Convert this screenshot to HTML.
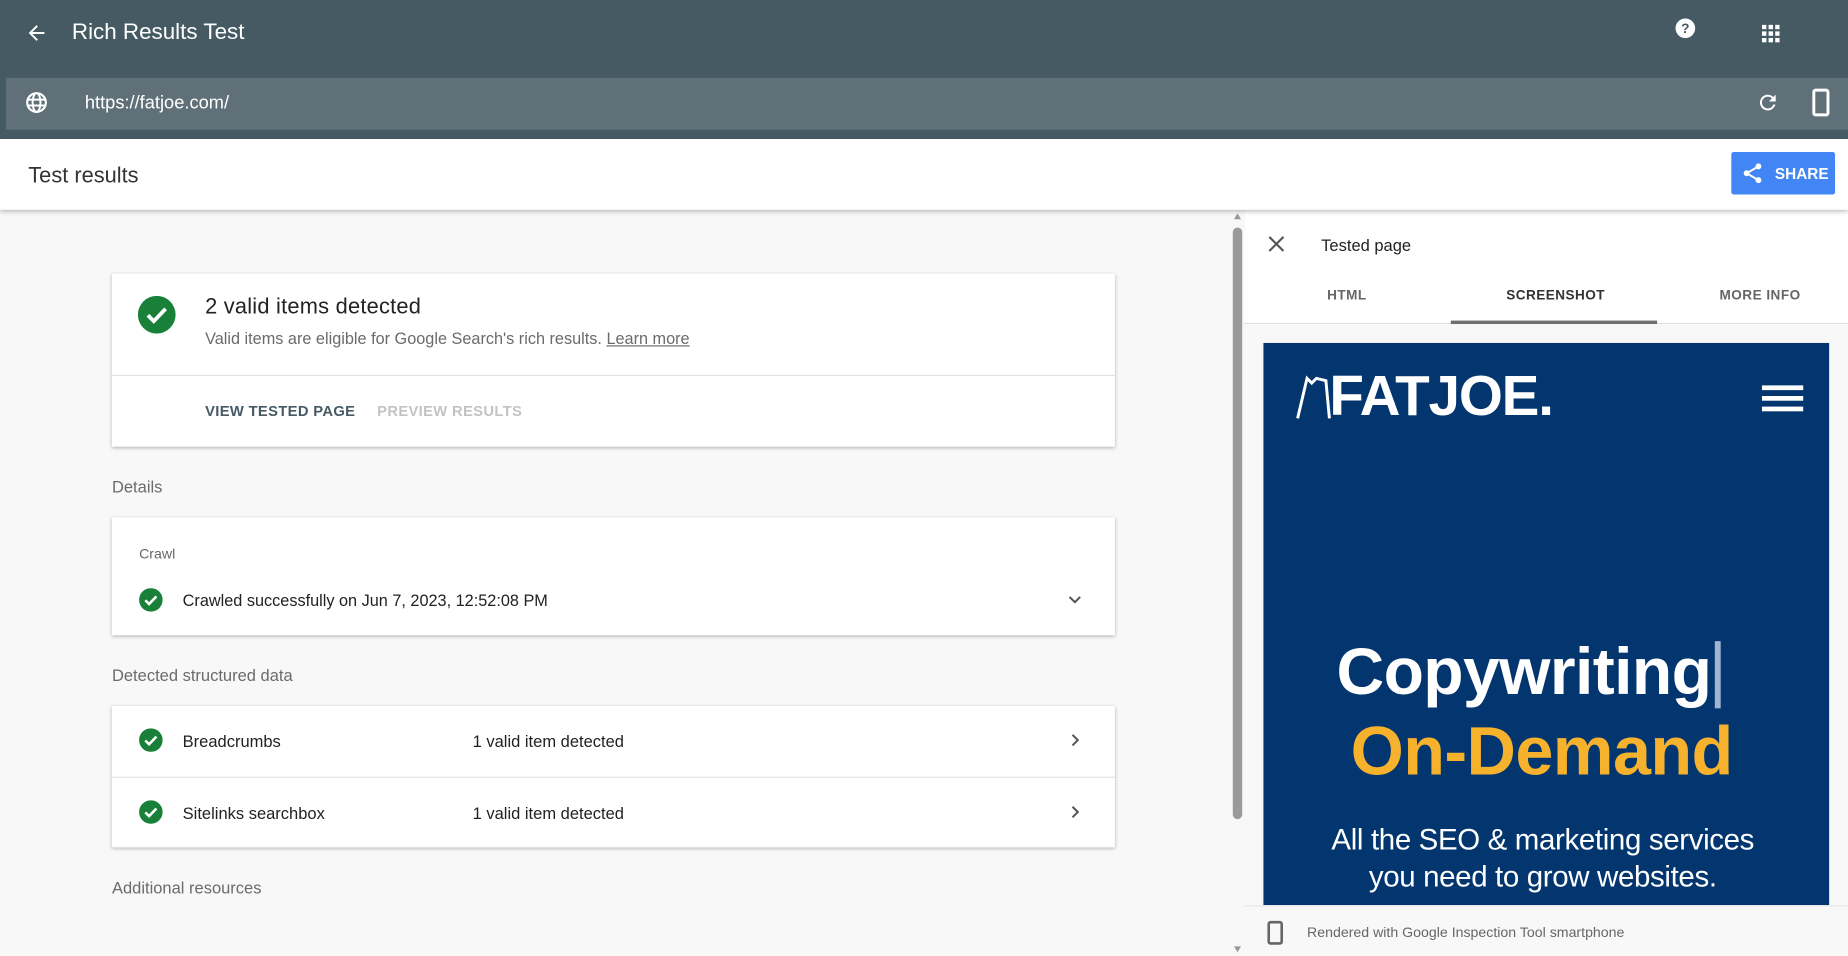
<!DOCTYPE html>
<html><head><meta charset="utf-8">
<style>
html,body{margin:0;padding:0;width:1848px;height:955px;overflow:hidden;background:#f8f8f8;font-family:"Liberation Sans",Arial,sans-serif}
#r{position:absolute;left:0;top:0;width:1568px;height:810px;transform:scale(1.17857);transform-origin:0 0;background:#f8f8f8}
.a{position:absolute}
.top{left:0;top:0;width:1568px;height:118px;background:#465a64}
.url{left:5px;top:66px;width:1563px;height:44px;background:#5f7079}
.bar{left:0;top:118px;width:1568px;height:60px;background:#fff;box-shadow:0 2px 4px rgba(0,0,0,.25);z-index:2}
.card{background:#fff;box-shadow:0 1px 3px rgba(0,0,0,.28);left:95px;width:851px}
.t{white-space:nowrap}
.sec{font-size:14px;color:#6b6b6b}
</style></head><body><div id="r">
<div class="a top"></div>
<svg class="a" style="left:21px;top:18px" width="20" height="20" viewBox="0 0 24 24"><path d="M20 11H7.8l5.6-5.6L12 4l-8 8 8 8 1.4-1.4L7.8 13H20z" fill="#fff"/></svg>
<div class="a t" style="left:61px;top:17px;font-size:19px;color:#fff">Rich Results Test</div>
<svg class="a" style="left:1420px;top:14px" width="20" height="20" viewBox="0 0 24 24"><circle cx="12" cy="12" r="10" fill="#fff"/><text x="12" y="17" font-size="14" font-weight="bold" text-anchor="middle" fill="#465a64" font-family="Liberation Sans">?</text></svg>
<svg class="a" style="left:1495px;top:21px" width="15" height="15" viewBox="0 0 16 16" fill="#fff"><rect x="0" y="0" width="4" height="4"/><rect x="6" y="0" width="4" height="4"/><rect x="12" y="0" width="4" height="4"/><rect x="0" y="6" width="4" height="4"/><rect x="6" y="6" width="4" height="4"/><rect x="12" y="6" width="4" height="4"/><rect x="0" y="12" width="4" height="4"/><rect x="6" y="12" width="4" height="4"/><rect x="12" y="12" width="4" height="4"/></svg>
<div class="a url"></div>
<svg class="a" style="left:21px;top:77px" width="20" height="20" viewBox="0 0 24 24"><circle cx="12" cy="12" r="9.5" fill="none" stroke="#fff" stroke-width="2.2"/><ellipse cx="12" cy="12" rx="4" ry="9.5" fill="none" stroke="#fff" stroke-width="2"/><path d="M3 9h18M3 15h18" stroke="#fff" stroke-width="2"/></svg>
<div class="a t" style="left:72px;top:79px;font-size:15.5px;color:#fff">https://fatjoe.com/</div>
<svg class="a" style="left:1490px;top:77px" width="20" height="20" viewBox="0 0 24 24"><path d="M17.6 6.4A8 8 0 1 0 19.7 14h-2.1A6 6 0 1 1 12 6c1.7 0 3.1.7 4.2 1.8L13 11h7V4z" fill="#fff"/></svg>
<svg class="a" style="left:1536px;top:75px" width="18" height="24" viewBox="0 0 18 24"><rect x="3" y="1.5" width="12" height="21" rx="1.5" fill="none" stroke="#fff" stroke-width="2.5"/></svg>
<div class="a bar"></div>
<div class="a t" style="left:24px;top:138px;font-size:18.5px;color:#333;z-index:3">Test results</div>
<div class="a" style="left:1469px;top:129px;width:88px;height:36px;background:#4285f4;border-radius:2px;z-index:3"></div>
<svg class="a" style="left:1477px;top:137px;z-index:4" width="20" height="20" viewBox="0 0 24 24"><circle cx="18" cy="5" r="3" fill="#fff"/><circle cx="6" cy="12" r="3" fill="#fff"/><circle cx="18" cy="19" r="3" fill="#fff"/><path d="M18 5L6 12l12 7" stroke="#fff" stroke-width="2" fill="none"/></svg>
<div class="a t" style="left:1506px;top:140px;font-size:13px;font-weight:bold;color:#fff;z-index:4">SHARE</div>

<div class="a" style="left:1046px;top:193px;width:8px;height:502px;background:#9a9a9a;border-radius:4px"></div>
<div class="a" style="left:1047px;top:181px;width:0;height:0;border-left:3px solid transparent;border-right:3px solid transparent;border-bottom:5px solid #999"></div>
<div class="a" style="left:1047px;top:803px;width:0;height:0;border-left:3px solid transparent;border-right:3px solid transparent;border-top:5px solid #999"></div>

<div class="a card" style="top:232px;height:147px"></div>
<svg class="a" style="left:117px;top:251px" width="32" height="32" viewBox="0 0 32 32"><circle cx="16" cy="16" r="16" fill="#188038"/><path d="M8.5 16.5l5 5 10-10.5" stroke="#fff" stroke-width="3.2" fill="none"/></svg>
<div class="a t" style="left:174px;top:249px;font-size:18.5px;font-weight:500;color:#222;letter-spacing:0.2px">2 valid items detected</div>
<div class="a t" style="left:174px;top:280px;font-size:13.8px;color:#6b6b6b">Valid items are eligible for Google Search's rich results. <span style="text-decoration:underline">Learn more</span></div>
<div class="a" style="left:95px;top:318px;width:851px;height:1px;background:#e3e3e3"></div>
<div class="a t" style="left:174px;top:342px;font-size:12.5px;font-weight:bold;color:#455a64;letter-spacing:.3px">VIEW TESTED PAGE</div>
<div class="a t" style="left:320px;top:342px;font-size:12.5px;font-weight:bold;color:#c3c3c3;letter-spacing:.3px">PREVIEW RESULTS</div>

<div class="a t sec" style="left:95px;top:405px">Details</div>
<div class="a card" style="top:439px;height:100px"></div>
<div class="a t" style="left:118px;top:463px;font-size:12px;color:#666">Crawl</div>
<svg class="a" style="left:118px;top:499px" width="20" height="20" viewBox="0 0 20 20"><circle cx="10" cy="10" r="10" fill="#188038"/><path d="M5.3 10.3l3.2 3.2 6.2-6.5" stroke="#fff" stroke-width="2.2" fill="none"/></svg>
<div class="a t" style="left:155px;top:502px;font-size:13.8px;color:#222">Crawled successfully on Jun 7, 2023, 12:52:08 PM</div>
<svg class="a" style="left:905px;top:502px" width="14" height="14" viewBox="0 0 14 14"><path d="M2.5 4.5l4.5 4.5 4.5-4.5" stroke="#555" stroke-width="1.7" fill="none"/></svg>

<div class="a t sec" style="left:95px;top:565px">Detected structured data</div>
<div class="a card" style="top:599px;height:120px"></div>
<div class="a" style="left:95px;top:659px;width:851px;height:1px;background:#e3e3e3"></div>
<svg class="a" style="left:118px;top:618px" width="20" height="20" viewBox="0 0 20 20"><circle cx="10" cy="10" r="10" fill="#188038"/><path d="M5.3 10.3l3.2 3.2 6.2-6.5" stroke="#fff" stroke-width="2.2" fill="none"/></svg>
<div class="a t" style="left:155px;top:621px;font-size:14px;color:#222">Breadcrumbs</div>
<div class="a t" style="left:401px;top:621px;font-size:14px;color:#222">1 valid item detected</div>
<svg class="a" style="left:905px;top:621px" width="14" height="14" viewBox="0 0 14 14"><path d="M5 2.5l4.5 4.5-4.5 4.5" stroke="#555" stroke-width="1.7" fill="none"/></svg>
<svg class="a" style="left:118px;top:679px" width="20" height="20" viewBox="0 0 20 20"><circle cx="10" cy="10" r="10" fill="#188038"/><path d="M5.3 10.3l3.2 3.2 6.2-6.5" stroke="#fff" stroke-width="2.2" fill="none"/></svg>
<div class="a t" style="left:155px;top:682px;font-size:14px;color:#222">Sitelinks searchbox</div>
<div class="a t" style="left:401px;top:682px;font-size:14px;color:#222">1 valid item detected</div>
<svg class="a" style="left:905px;top:682px" width="14" height="14" viewBox="0 0 14 14"><path d="M5 2.5l4.5 4.5-4.5 4.5" stroke="#555" stroke-width="1.7" fill="none"/></svg>
<div class="a t sec" style="left:95px;top:745px">Additional resources</div>

<!-- right panel -->
<div class="a" style="left:1056px;top:178px;width:512px;height:632px;background:#fff"></div>
<svg class="a" style="left:1075px;top:199px" width="16" height="16" viewBox="0 0 16 16"><path d="M2 2l12 12M14 2L2 14" stroke="#555" stroke-width="1.8"/></svg>
<div class="a t" style="left:1121px;top:200px;font-size:14px;color:#222">Tested page</div>
<div class="a t" style="left:1126px;top:245px;font-size:11.5px;font-weight:bold;color:#666;letter-spacing:.4px">HTML</div>
<div class="a t" style="left:1278px;top:245px;font-size:11.5px;font-weight:bold;color:#333;letter-spacing:.4px">SCREENSHOT</div>
<div class="a t" style="left:1459px;top:245px;font-size:11.5px;font-weight:bold;color:#666;letter-spacing:.4px">MORE INFO</div>
<div class="a" style="left:1056px;top:274px;width:512px;height:1px;background:#e0e0e0"></div>
<div class="a" style="left:1231px;top:272px;width:175px;height:3px;background:#707070"></div>
<div class="a" style="left:1056px;top:275px;width:512px;height:493px;background:#f8f8f8"></div>
<div class="a" style="left:1072px;top:291px;width:480px;height:477px;background:#03366f;overflow:hidden">
  <svg class="a" style="left:27px;top:26px" width="32" height="40" viewBox="0 0 32 40"><path d="M2 38L10 4 14 8 18 4 26 6 29 38" stroke="#fff" stroke-width="2.5" fill="none"/></svg>
  <div class="a t" style="left:56px;top:18px;font-size:48px;font-weight:bold;color:#fff;letter-spacing:-1px">FATJOE.</div>
  <div class="a" style="left:423px;top:36px;width:35px;height:4px;background:#fff"></div>
  <div class="a" style="left:423px;top:45px;width:35px;height:4px;background:#fff"></div>
  <div class="a" style="left:423px;top:54px;width:35px;height:4px;background:#fff"></div>
  <div class="a t" style="left:62px;top:246px;font-size:56px;font-weight:bold;color:#fff;letter-spacing:-0.5px">Copywriting<span style="display:inline-block;width:5px;height:57px;background:#9fb5d2;vertical-align:-12px;margin-left:3px"></span></div>
  <div class="a t" style="left:74px;top:313px;font-size:58px;font-weight:bold;color:#f6b12d;letter-spacing:-0.5px">On-Demand</div>
  <div class="a" style="left:0;top:407px;width:474px;text-align:center;font-size:25px;color:#fff;line-height:31px;letter-spacing:-0.3px">All the SEO &amp; marketing services<br>you need to grow websites.</div>
</div>
<div class="a" style="left:1056px;top:768px;width:512px;height:42px;background:#f8f8f8;border-top:1px solid #e6e6e6"></div>
<svg class="a" style="left:1075px;top:781px" width="14" height="21" viewBox="0 0 14 21"><rect x="1.5" y="1.5" width="11" height="18" rx="1.5" fill="none" stroke="#666" stroke-width="2.2"/></svg>
<div class="a t" style="left:1109px;top:784px;font-size:12px;color:#666">Rendered with Google Inspection Tool smartphone</div>
</div></body></html>
